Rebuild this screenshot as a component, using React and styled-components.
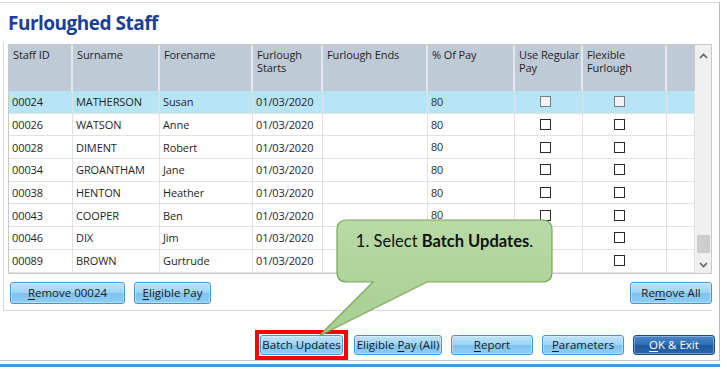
import React from 'react';
import styled, { createGlobalStyle, css } from 'styled-components';

const GlobalStyle = createGlobalStyle`
  body {
    margin: 0;
    background: #ffffff;
    font-family: "Open Sans", "Liberation Sans", sans-serif;
    color: #1e1e1e;
  }
`

const COLS = '64px 87px 93px 70px 105px 87px 68px 84px 28px';

const staff = [
  { id: '00024', surname: 'MATHERSON', forename: 'Susan' },
  { id: '00026', surname: 'WATSON', forename: 'Anne' },
  { id: '00028', surname: 'DIMENT', forename: 'Robert' },
  { id: '00034', surname: 'GROANTHAM', forename: 'Jane' },
  { id: '00038', surname: 'HENTON', forename: 'Heather' },
  { id: '00043', surname: 'COOPER', forename: 'Ben' },
  { id: '00046', surname: 'DIX', forename: 'Jim' },
  { id: '00089', surname: 'BROWN', forename: 'Gurtrude' },
];

const Frame = styled.div`
  position: relative;
  box-sizing: border-box;
  width: 720px;
  height: 359px;
  margin-top: 2px;
  border-top: 1px solid #d9d9d9;
  border-right: 1px solid #b9b9b9;
  border-bottom: 1px solid #c6c6c6;
`

const Title = styled.h1`
  margin: 0;
  height: 39px;
  box-sizing: border-box;
  padding: 7px 0 0 8px;
  font: bold 19px/26px "Open Sans", sans-serif;
  color: #1b3f95;
  letter-spacing: -0.5px;
`

const Panel = styled.div`
  margin-left: 3px;
  width: 709px;
  box-sizing: border-box;
  border-left: 1px solid #d6d6d6;
  border-bottom: 1px solid #d6d6d6;
  padding: 2px 0 6px 4px;
`

const GridBox = styled.div`
  display: flex;
  width: 704px;
  box-sizing: border-box;
  border: 1px solid #c9c9c9;
  background: #fff;
`

const GridBody = styled.div`
  flex: 1;
`

const Row = styled.div`
  display: grid;
  grid-template-columns: ${COLS};
  height: ${p => (p.$header ? '46px' : '22.7px')};
  background: ${p => (p.$header ? '#bfcad7' : p.$selected ? '#b8e5f6' : '#fff')};
`

const HeadCell = styled.div`
  box-sizing: border-box;
  padding: 3px 3px 0 4px;
  border-right: 2px solid #e4e8ee;
  font-size: 11px;
  line-height: 13px;
  letter-spacing: -0.1px;
  color: #1f1f1f;
  white-space: nowrap;
  overflow: hidden;
  &:last-child { border-right: none; }
`

const Cell = styled.div`
  box-sizing: border-box;
  display: flex;
  align-items: center;
  padding: 0 0 0 ${p => (p.$pl ? p.$pl : 3)}px;
  border-right: 1px solid #e2e2e2;
  border-bottom: 1px solid #e2e2e2;
  font-size: 11px;
  letter-spacing: -0.1px;
  color: #1f1f1f;
  white-space: nowrap;
  ${p => p.$arial && css`
    font: 11px "Liberation Sans", Arial, sans-serif;
    color: #333;
  `}
`

const Check = styled.span`
  width: 11px;
  height: 11px;
  box-sizing: border-box;
  border: 1px solid ${p => (p.$light ? '#7d7d7d' : '#2a2a2a')};
  background: ${p => (p.$light ? '#eef4f8' : '#fff')};
`

const ScrollBar = styled.div`
  position: relative;
  width: 16px;
  background: #f0f0f0;
  display: flex;
  flex-direction: column;
  align-items: center;
  justify-content: space-between;
  padding: 8px 0 5px;
  box-sizing: border-box;
`

const Thumb = styled.div`
  position: absolute;
  left: 2px;
  right: 1px;
  top: 190px;
  height: 18px;
  background: #cdcdcd;
`

const ButtonRow = styled.div`
  display: flex;
  gap: 9px;
  margin-top: 8px;
  padding-left: 2px;
  width: 704px;
  box-sizing: border-box;
`

const Btn = styled.button`
  height: ${p => (p.$small ? '20px' : '22px')};
  width: ${p => p.$w}px;
  padding: 0;
  box-sizing: border-box;
  border: 1px solid ${p => (p.$dark ? '#1d4c86' : '#3f96dc')};
  border-radius: 3px;
  font: 11.5px "Open Sans", sans-serif;
  color: ${p => (p.$dark ? '#ffffff' : '#1a1a1a')};
  background: ${p => (p.$dark
    ? 'linear-gradient(#4a88cc, #2f6db3 50%, #1f5aa0 51%, #2b66a8)'
    : 'linear-gradient(#bfe4fb, #9bd3f7 50%, #7cc3f2 51%, #8fcdf5)')};
  box-shadow: inset 0 0 0 1px rgba(255, 255, 255, 0.35);
  margin-left: ${p => (p.$push ? 'auto' : '0')};
  u { text-decoration: underline; text-underline-offset: 2px; }
`

const Marker = styled.span`
  display: flex;
  margin: -5px -3px -5px 0;
  padding: 1px;
  border: 4px solid #ff0000;
  background: #fff;
`

const Footer = styled.div`
  display: flex;
  justify-content: flex-end;
  align-items: center;
  gap: 9px;
  padding: 24px 4px 0 0;
`

const BlueBar = styled.div`
  width: 720px;
  height: 3px;
  margin-top: 3px;
  background: #3d9be9;
`

const Callout = styled.div`
  position: absolute;
  left: 316px;
  top: 212px;
  width: 240px;
  height: 122px;
  svg { position: absolute; inset: 0; }
`

const CalloutText = styled.div`
  position: absolute;
  left: 21px;
  top: 2px;
  width: 215px;
  padding-top: 14px;
  text-align: center;
  font: 16.5px Lato, "Open Sans", sans-serif;
  color: #111;
  b { font-weight: bold; }
`

const Chevron = ({ up }) => (
  <svg width="9" height="6" viewBox="0 0 9 6">
    <path
      d={up ? 'M1 5 L4.5 1.5 L8 5' : 'M1 1 L4.5 4.5 L8 1'}
      fill="none"
      stroke="#606060"
      strokeWidth="1.6"
    />
  </svg>
);

const App = () => {
  const rows = staff.map((s, i) => {
    const sel = i === 0;
    return (
      <Row key={s.id} $selected={sel}>
        <Cell>{s.id}</Cell>
        <Cell>{s.surname}</Cell>
        <Cell>{s.forename}</Cell>
        <Cell>01/03/2020</Cell>
        <Cell />
        <Cell $arial>80</Cell>
        <Cell $pl={25}><Check $light={sel} /></Cell>
        <Cell $pl={31}><Check $light={sel} /></Cell>
        <Cell />
      </Row>
    );
  });

  return (
    <>
      <GlobalStyle />
      <Frame>
        <Title>Furloughed Staff</Title>
        <Panel>
          <GridBox>
            <GridBody>
              <Row $header>
                <HeadCell>Staff ID</HeadCell>
                <HeadCell>Surname</HeadCell>
                <HeadCell>Forename</HeadCell>
                <HeadCell>Furlough<br />Starts</HeadCell>
                <HeadCell>Furlough Ends</HeadCell>
                <HeadCell>% Of Pay</HeadCell>
                <HeadCell>Use Regular<br />Pay</HeadCell>
                <HeadCell>Flexible<br />Furlough</HeadCell>
                <HeadCell />
              </Row>
              {rows}
            </GridBody>
            <ScrollBar>
              <Chevron up />
              <Thumb />
              <Chevron />
            </ScrollBar>
          </GridBox>
          <ButtonRow>
            <Btn $w={115}><u>R</u>emove 00024</Btn>
            <Btn $w={77}><u>E</u>ligible Pay</Btn>
            <Btn $w={82} $push>Re<u>m</u>ove All</Btn>
          </ButtonRow>
        </Panel>
        <Footer>
          <Marker>
            <Btn $w={83} $small>Batch Updates</Btn>
          </Marker>
          <Btn $w={88} $small>Eligible <u>P</u>ay (All)</Btn>
          <Btn $w={82} $small><u>R</u>eport</Btn>
          <Btn $w={82} $small><u>P</u>arameters</Btn>
          <Btn $w={82} $small $dark><u>O</u>K &amp; Exit</Btn>
        </Footer>
        <Callout>
          <svg width="240" height="122" viewBox="0 0 240 122">
            <defs>
              <linearGradient id="cg" x1="0" y1="0" x2="0" y2="1">
                <stop offset="0" stopColor="#b9daa7" />
                <stop offset="1" stopColor="#a7ce91" />
              </linearGradient>
            </defs>
            <path
              d="M31 5 H226 Q236 5 236 15 V57 Q236 67 226 67 H111 L3 121 L57 67 H31 Q21 67 21 57 V15 Q21 5 31 5 Z"
              fill="url(#cg)"
              stroke="#75a856"
              strokeWidth="1.2"
            />
          </svg>
          <CalloutText>1. Select <b>Batch Updates</b>.</CalloutText>
        </Callout>
      </Frame>
      <BlueBar />
    </>
  );
};

export default App;
